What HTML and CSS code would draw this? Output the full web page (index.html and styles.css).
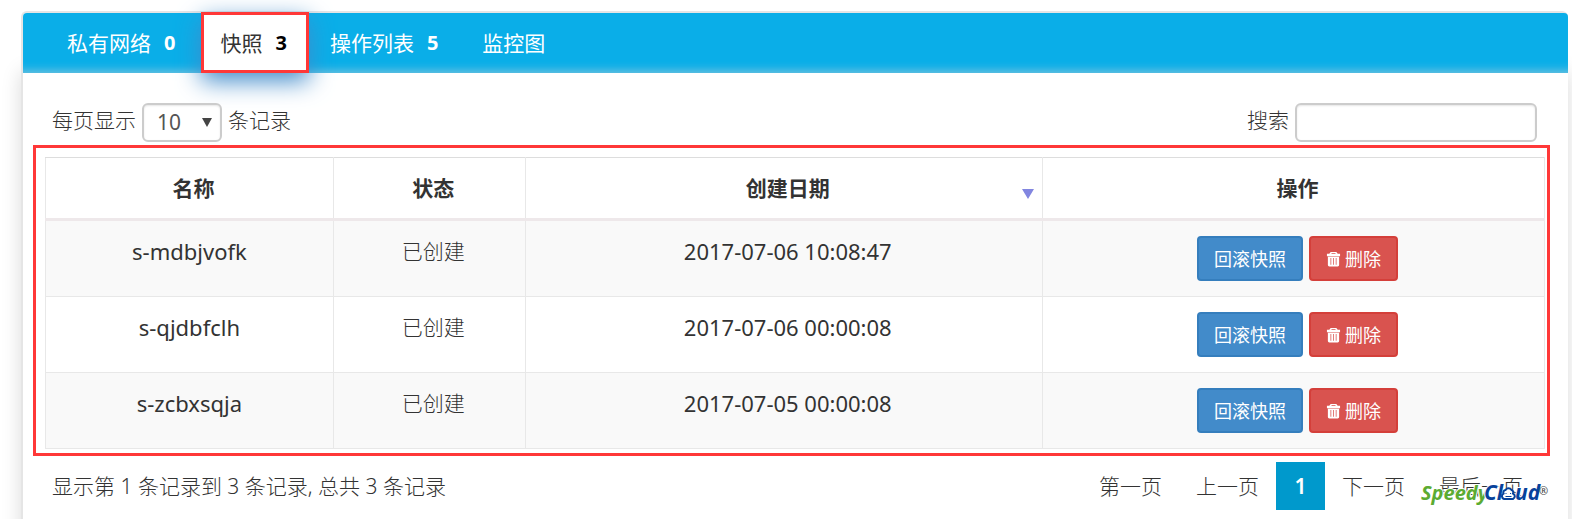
FILE: index.html
```html
<!DOCTYPE html>
<html lang="zh-CN">

<head>
  <meta charset="UTF-8">
  <meta name="viewport" content="width=device-width, initial-scale=1.0">
  <title>快照</title>
  <link rel="stylesheet" href="styles.css">
</head>

<body>
  <svg class="sprite" aria-hidden="true">
    <symbol id="icon-trash" viewBox="0 0 16 16">
      <path d="M5 0.500h6l1.500 2H15v2.500H1V2.500h2.500zM6.200 1.500L5.500 2.500h5l-.7-1zM2 5.500h12V14.500a1.500 1.500 0 0 1-1.500 1.500h-9A1.500 1.500 0 0 1 2 14.500zM4.800 7v7h.8V7zM7.600 7v7h.8V7zM10.400 7v7h.8V7z" fill="currentColor" fill-rule="evenodd" />
    </symbol>
  </svg>

  <main class="panel">
    <nav class="tabs">
      <a class="tab" href="#network">私有网络 <span class="badge">0</span></a>
      <a class="tab active" href="#snapshot">快照 <span class="badge">3</span></a>
      <a class="tab" href="#actions">操作列表 <span class="badge">5</span></a>
      <a class="tab" href="#monitor">监控图</a>
    </nav>

    <div class="toolbar">
      <label class="control">每页显示
        <span class="select-box">
          <select>
            <option>10</option>
            <option>25</option>
            <option>50</option>
          </select>
        </span>
        条记录
      </label>
      <label class="control">搜索 <input class="search" type="text"></label>
    </div>

    <div class="table-box">
      <table class="snapshots">
        <colgroup>
          <col class="col-name">
          <col class="col-status">
          <col class="col-date">
          <col class="col-action">
        </colgroup>
        <thead>
          <tr>
            <th>名称</th>
            <th>状态</th>
            <th class="sorted">创建日期</th>
            <th>操作</th>
          </tr>
        </thead>
        <tbody>
          <tr>
            <td class="name">s-mdbjvofk</td>
            <td>已创建</td>
            <td class="date">2017-07-06 10:08:47</td>
            <td>
              <div class="actions">
                <button class="btn btn-primary" type="button">回滚快照</button>
                <button class="btn btn-danger" type="button"><svg class="icon"><use href="#icon-trash" /></svg>删除</button>
              </div>
            </td>
          </tr>
          <tr>
            <td class="name">s-qjdbfclh</td>
            <td>已创建</td>
            <td class="date">2017-07-06 00:00:08</td>
            <td>
              <div class="actions">
                <button class="btn btn-primary" type="button">回滚快照</button>
                <button class="btn btn-danger" type="button"><svg class="icon"><use href="#icon-trash" /></svg>删除</button>
              </div>
            </td>
          </tr>
          <tr>
            <td class="name">s-zcbxsqja</td>
            <td>已创建</td>
            <td class="date">2017-07-05 00:00:08</td>
            <td>
              <div class="actions">
                <button class="btn btn-primary" type="button">回滚快照</button>
                <button class="btn btn-danger" type="button"><svg class="icon"><use href="#icon-trash" /></svg>删除</button>
              </div>
            </td>
          </tr>
        </tbody>
      </table>
    </div>

    <div class="footer">
      <div class="info">显示第 1 条记录到 3 条记录, 总共 3 条记录</div>
      <nav class="pagination">
        <a href="#first">第一页</a>
        <a href="#prev">上一页</a>
        <a class="current" href="#1">1</a>
        <a href="#next">下一页</a>
        <a href="#last">最后一页</a>
      </nav>
    </div>

    <!-- watermark over the pager -->
    <svg class="logo" width="132" height="34" viewBox="0 0 132 34" role="img" aria-label="SpeedyCloud">
      <g class="logo-text">
        <text class="logo-green" x="2" y="23">Speedy</text>
        <text class="logo-blue" x="65" y="23">Cl</text>
        <text class="logo-blue" x="96" y="23">ud</text>
      </g>
      <path class="logo-cloud" d="M85 22a3 3 0 0 1-.5-5.500a2.500 2.500 0 0 1 2-3.500a3.500 3.500 0 0 1 6 0a2.500 2.500 0 0 1 1.500 3.500a3 3 0 0 1 0 5.500z" />
      <path class="logo-face" d="M87 16v1M91.500 16v1M86.500 19.500h6" />
      <text class="logo-mark" x="120" y="18">®</text>
    </svg>
  </main>
</body>

</html>
```
FILE: styles.css
```css
* {
  box-sizing: border-box;
}

body {
  margin: 0;
  padding: 11px 4px 0 21px;
  font-family: "Noto Sans", "Noto Sans CJK SC", sans-serif;
  font-size: 21px;
  line-height: 30px;
  color: #333;
  background: #fff;
}

a {
  color: inherit;
  text-decoration: none;
}

.sprite {
  display: none;
}

.panel {
  position: relative;
  min-height: calc(100vh - 11px);
  border: 2px solid #e5e5e5;
  border-right: 0;
  border-bottom: 0;
  border-radius: 6px 6px 0 0;
  box-shadow: 0 60px 20px rgba(0, 0, 0, 0.15);
}

.tabs {
  display: flex;
  height: 60px;
  padding-left: 26px;
  background: #0aaee8;
  border-radius: 4px 4px 0 0;
  box-shadow: inset 0 -10px 10px -8px #7cc4de;
}

.tab {
  display: flex;
  align-items: center;
  gap: 13px;
  padding: 0 18px;
  color: #fff;
}

.tab:last-child {
  margin-left: 8px;
}

.tab.active {
  padding: 0 19px 0 16px;
  margin: -1px 3px 0 8px;
  border: 3px solid #ff3838;
  background: #fff;
  color: #333;
  box-shadow: 0 8px 24px #428bca;
}

.badge {
  font-size: 20px;
  font-weight: 700;
}

.active .badge {
  color: #000;
}

.toolbar {
  display: flex;
  justify-content: space-between;
  padding: 30px 31px 0 29px;
  line-height: 35px;
  color: #333;
}

.toolbar,
.footer {
  font-weight: 300;
}

.control {
  display: flex;
  align-items: flex-start;
  gap: 6px;
}

.select-box {
  position: relative;
}

.select-box::after {
  content: "";
  position: absolute;
  top: 15px;
  right: 10px;
  border: 5px solid transparent;
  border-top: 9px solid #444;
  border-bottom: 0;
  pointer-events: none;
}

select,
.search {
  display: block;
  height: 39px;
  border: 2px solid #ccc;
  border-radius: 6px;
  background: #fff;
  box-shadow: inset 0 1px 2px rgba(0, 0, 0, 0.1);
  color: #555;
  font: inherit;
  font-weight: 400;
}

select {
  width: 80px;
  padding: 0 13px;
  appearance: none;
}

.search {
  width: 242px;
  padding: 0 10px;
}

.table-box {
  margin: 3px 18px 0 10px;
  padding: 9px 2px 4px 9px;
  border: 3px solid #ff3838;
}

.snapshots {
  width: 100%;
  border-collapse: collapse;
  table-layout: fixed;
  text-align: center;
}

.col-name {
  width: 19.2%;
}

.col-status {
  width: 12.8%;
}

.col-date {
  width: 34.5%;
}

.snapshots th,
.snapshots td {
  padding: 15px 6px 15px 14px;
  border: 1px solid #e8e8e8;
  vertical-align: top;
}

.snapshots th {
  position: relative;
  height: 62px;
  border-top-color: #ddd;
  border-bottom: 3px solid #eee8ea;
}

.snapshots td {
  font-weight: 300;
}

.snapshots .name,
.snapshots .date {
  font-size: 22px;
  font-weight: 400;
}

.snapshots .name {
  padding-right: 10px;
  padding-left: 10px;
}

.sorted::after {
  content: "";
  position: absolute;
  right: 8px;
  top: 31px;
  border: 6px solid transparent;
  border-top: 10px solid #8286e0;
  border-bottom: 0;
}

.snapshots tbody tr:nth-child(odd) {
  background: #f9f9f9;
}

.actions {
  display: flex;
  justify-content: center;
  gap: 6px;
}

.btn {
  display: flex;
  align-items: center;
  gap: 4px;
  height: 45px;
  padding: 0 15px;
  border: 2px solid;
  border-radius: 4px;
  color: #fff;
  font: inherit;
  font-size: 18px;
  font-weight: 400;
}

.btn-primary {
  background: #428bca;
  border-color: #357ebd;
}

.btn-danger {
  background: #d9534f;
  border-color: #d43f3a;
}

.icon {
  width: 15px;
  height: 16px;
}

.footer {
  display: flex;
  justify-content: space-between;
  align-items: center;
  padding: 6px 28px 0 29px;
}

.info {
  color: #333;
}

.pagination {
  display: flex;
}

.pagination a {
  min-width: 49px;
  padding: 9px 17px;
  text-align: center;
}

.pagination .current {
  background: #0099cc;
  color: #fff;
  font-weight: 600;
}

.logo {
  position: absolute;
  right: 17px;
  top: 464px;
}

.logo-text {
  font-family: "Open Sans", sans-serif;
  font-size: 21px;
  font-style: italic;
  font-weight: 700;
  stroke: #fff;
  stroke-width: 2px;
  paint-order: stroke;
}

.logo-green {
  fill: #5cab32;
  font-size: 20px;
}

.logo-blue {
  fill: #07429b;
}

.logo-cloud {
  fill: #fff;
  stroke: #07429b;
  stroke-width: 2px;
}

.logo-face {
  fill: none;
  stroke: #07429b;
}

.logo-mark {
  font-size: 11px;
  font-weight: 400;
  fill: #444;
}
```
